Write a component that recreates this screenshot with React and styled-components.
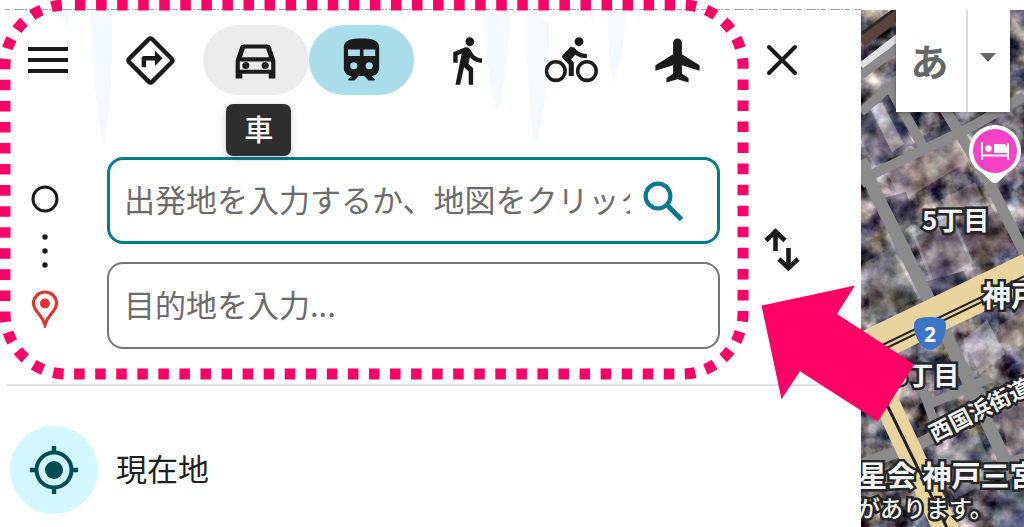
import React from "react";
import styled, { createGlobalStyle } from "styled-components";
import { MdOutlineDirections, MdDirectionsWalk } from "react-icons/md";

const modes = [
  { id: "best", label: "おすすめの交通手段", icon: <MdOutlineDirections /> },
  { id: "car", label: "車", icon: <CarIcon />, hovered: true },
  { id: "transit", label: "公共交通機関", icon: <TrainIcon />, selected: true },
  { id: "walk", label: "徒歩", icon: <MdDirectionsWalk /> },
  { id: "bike", label: "自転車", icon: <BikeIcon /> },
  { id: "flight", label: "飛行機", icon: <PlaneIcon /> },
];

export default function App() {
  return (
    <Page>
      <GlobalStyle />
      <Panel>
        <Directions>
          <Icicles />
          <Highlighted>
            <ModeRow>
              <IconButton aria-label="メニュー">
                <svg width="42" height="30" viewBox="0 0 42 30">
                  <path d="M0 4h40M0 15h40M0 26h40" stroke="#1b1b1b" strokeWidth="4" />
                </svg>
              </IconButton>
              {modes.map((mode) => (
                <ModeButton
                  key={mode.id}
                  aria-label={mode.label}
                  $hovered={mode.hovered}
                  $selected={mode.selected}
                >
                  {mode.icon}
                  {mode.hovered && <Tooltip>{mode.label}</Tooltip>}
                </ModeButton>
              ))}
            </ModeRow>
            <Route>
              <RouteMarks>
                <svg width="28" height="28" viewBox="0 0 28 28">
                  <circle cx="14" cy="14" r="12" fill="none" stroke="#1b1b1b" strokeWidth="3" />
                </svg>
                <svg width="6" height="36" viewBox="0 0 6 36">
                  <g fill="#1b1b1b">
                    <circle cx="3" cy="3" r="2.7" />
                    <circle cx="3" cy="17" r="2.7" />
                    <circle cx="3" cy="31" r="2.7" />
                  </g>
                </svg>
                <svg width="28" height="38" viewBox="0 0 28 38">
                  <path
                    d="M14 2C7.400 2 2.500 7 2.500 13.300c0 4 2.400 7.300 5.200 10.500 2.800 3.200 5 6.600 6.300 11 1.300-4.400 3.500-7.800 6.300-11 2.800-3.200 5.200-6.500 5.200-10.500C25.500 7 20.600 2 14 2z"
                    fill="none"
                    stroke="#dc362e"
                    strokeWidth="3.200"
                  />
                  <circle cx="14" cy="13.500" r="5" fill="#dc362e" />
                </svg>
              </RouteMarks>
              <Fields>
                <Field $active>
                  <input aria-label="出発地" placeholder="出発地を入力するか、地図をクリックします..." />
                  <SearchButton aria-label="検索">
                    <svg width="44" height="44" viewBox="0 0 44 44" fill="none" stroke="#007b8b">
                      <circle cx="17" cy="17" r="12.400" strokeWidth="4.200" />
                      <path d="M26 26l14.500 14.500" strokeWidth="5" />
                    </svg>
                  </SearchButton>
                </Field>
                <Field>
                  <input aria-label="目的地" placeholder="目的地を入力..." />
                </Field>
              </Fields>
            </Route>
            <DottedFrame aria-hidden="true">
              <rect x="5" y="5" rx="61" ry="61" />
            </DottedFrame>
          </Highlighted>
          <SideActions>
            <IconButton aria-label="閉じる">
              <svg width="42" height="42" viewBox="0 0 42 42">
                <path
                  d="M8 8l26 26M34 8l-26 26"
                  stroke="#1b1b1b"
                  strokeWidth="4"
                  strokeLinecap="round"
                />
              </svg>
            </IconButton>
            <IconButton aria-label="出発地と目的地を入れ替え">
              <svg width="42" height="44" viewBox="0 0 42 44" fill="none" stroke="#1b1b1b" strokeWidth="4.600">
                <path d="M14.500 23V4M5 12.500l9.500-9 9.500 9" />
                <path d="M27.500 20v19M18 31l9.500 9 9.500-9" />
              </svg>
            </IconButton>
          </SideActions>
        </Directions>
        <Divider />
        <CurrentLocation>
          <LocationBadge>
            <svg width="48" height="48" viewBox="0 0 48 48" fill="none" stroke="#004d57">
              <circle cx="24" cy="24" r="17.500" strokeWidth="4" />
              <circle cx="24" cy="24" r="9" fill="#004d57" stroke="none" />
              <path d="M24 0v7M24 41v7M0 24h7M41 24h7" strokeWidth="4.400" />
            </svg>
          </LocationBadge>
          <span>現在地</span>
        </CurrentLocation>
      </Panel>
      <MapArea>
        <Satellite />
        <MapLabel $x={61} $y={201} $size={26}>5丁目</MapLabel>
        <MapLabel $x={31} $y={356} $size={26}>6丁目</MapLabel>
        <MapLabel $x={121} $y={276} $size={29}>神戸三宮</MapLabel>
        <MapLabel $x={69} $y={415} $size={22} $turn={-27}>西国浜街道</MapLabel>
        <MapLabel $x={-3} $y={456} $size={29}>星会 神戸三宮</MapLabel>
        <MapLabel $x={-4} $y={489} $size={23} $light>があります。</MapLabel>
        <RouteShield>
          <svg width="34" height="34" viewBox="0 0 34 34">
            <path d="M7 1q10-2 20 0 6 1 6 8 0 8-5 16-5 8-11 8T6 25Q1 17 1 9q0-7 6-8z" fill="#3a75c7" />
          </svg>
          <span>2</span>
        </RouteShield>
        <HotelPin width="54" height="62" viewBox="0 0 54 62">
          <path d="M27 1a26 26 0 0 0-26 26c0 10 5 17 12 21 6 4 9 11 14 11s8-7 14-11c7-4 12-11 12-21A26 26 0 0 0 27 1z" fill="#fff" />
          <circle cx="27" cy="27" r="22" fill="#f641c9" />
          <path d="M14 18v18M40 19v17M14 31.500h26" stroke="#fff" strokeWidth="2" />
          <circle cx="20.500" cy="24.500" r="3.300" fill="#fff" />
          <path d="M26 20h9q4 0 4 4v5H26z" fill="#fff" />
        </HotelPin>
        <InputTools>
          <button aria-label="ひらがな入力">あ</button>
          <button aria-label="入力ツールを選択">
            <svg width="16" height="9" viewBox="0 0 16 9">
              <path d="M0 0h16L8 9z" fill="#666" />
            </svg>
          </button>
        </InputTools>
      </MapArea>
      <PointerArrow width="154" height="138" viewBox="761 285 154 138" aria-hidden="true">
        <path d="M761.500 305.500l93.500-20-18 28.500 77.500 50.500L878 421.500 800 371.300l-18.500 28z" fill="#ff0066" />
      </PointerArrow>
    </Page>
  );
}

function CarIcon() {
  return (
    <svg viewBox="0 0 24 24" fill="currentColor">
      <path
        fillRule="evenodd"
        d="M6.600 4.800h10.800q1.100 0 1.500 1L21 12v8.200h-3V18H6v2.200H3V12l2.100-6.200q.4-1 1.500-1zM7.200 6.600L5.900 10.500h12.200l-1.300-3.900zM4.900 12.400v3.800h14.200v-3.800z"
      />
      <circle cx="7.600" cy="14.300" r="1.600" />
      <circle cx="16.400" cy="14.300" r="1.600" />
    </svg>
  );
}

function TrainIcon() {
  return (
    <svg viewBox="0 0 24 24" fill="currentColor">
      <path
        fillRule="evenodd"
        d="M12 2C7.600 2 4 2.500 4 6v9.500C4 17.400 5.600 19 7.500 19L6 20.500v.5h2.800l2-2h2.400l2 2H18v-.5L16.500 19c1.900 0 3.500-1.600 3.500-3.500V6c0-3.500-3.600-4-8-4zM5.900 7h5.400v3H5.900zM12.900 7h5.300v3h-5.300zM8.500 12.800a1.600 1.600 0 1 1 0 3.200 1.600 1.600 0 0 1 0-3.200zM15.500 12.800a1.600 1.600 0 1 1 0 3.200 1.600 1.600 0 0 1 0-3.200z"
      />
    </svg>
  );
}

function BikeIcon() {
  return (
    <svg viewBox="0 0 24 24" fill="none" stroke="currentColor" overflow="visible">
      <circle cx="4.900" cy="16.800" r="4.200" strokeWidth="1.600" />
      <circle cx="19" cy="16.800" r="4.200" strokeWidth="1.600" />
      <circle cx="15.400" cy="3.500" r="2" fill="currentColor" stroke="none" />
      <path d="M12.700 6.300L8.900 10.300l3 3V19" strokeWidth="2.300" strokeLinejoin="round" />
      <path d="M12.300 6.400c1.200 2 3 3.600 6.700 3.600" strokeWidth="2" />
      <path d="M11.300 7.500l3 1.300-3 3.200-1.500-1.700z" fill="currentColor" stroke="none" />
    </svg>
  );
}

function PlaneIcon() {
  return (
    <svg viewBox="0 0 24 24" fill="currentColor">
      <path d="M22 16.600v-2.400l-8-5V4c0-1.100-.9-2-2-2s-2 .9-2 2v5.200l-8 5v2.400l8-2.500V18l-3 1.900V22l5-1.500 5 1.500v-2.100L14 18v-3.900z" />
    </svg>
  );
}

function Icicles() {
  return (
    <IcicleArt aria-hidden="true">
      <path d="M5 9.500H1100" stroke="#a5a5a5" strokeDasharray="5 2 1 2 9 1 2 2" />
      <g fill="#f3f9fc">
        <path d="M62 10h8q0 12-4 17-3-5-4-17z" />
        <path d="M91 10h21q1 90-8 137Q93 100 91 10z" />
        <path d="M484 10h26q-2 70-13 101-10-30-13-101z" />
        <path d="M527 10q8 8 22 14 0 80-14 122-9-50-8-136z" />
        <path d="M608 10h18q-2 50-13 73-6-30-5-73z" />
        <path d="M400 10h6l-3 12zM590 10h6l-4 16zM160 10h4l-2 8z" />
      </g>
    </IcicleArt>
  );
}

// Aerial view: rooftops, side streets and the two main roads
function Satellite() {
  return (
    <SatelliteArt viewBox="861 10 163 517" preserveAspectRatio="xMinYMin slice" aria-hidden="true">
      <defs>
        <filter id="ground" x="0" y="0" width="100%" height="100%" colorInterpolationFilters="sRGB">
          <feTurbulence type="fractalNoise" baseFrequency="0.045" numOctaves="5" seed="8" />
          <feColorMatrix values="1.5 .3 0 0 -.46  1.5 .1 0 0 -.38  1.4 0 .3 0 -.4  0 0 0 0 1" />
        </filter>
      </defs>
      <rect x="861" y="10" width="163" height="517" filter="url(#ground)" />
      <g opacity=".4">
        <path d="M884 92l30 52-38 22-15-26V108z" fill="#40456a" />
        <path d="M870 108l12-6 22 42-12 8z" fill="#c9c3cf" />
        <path d="M884 168l70-35 18 26-70 42z" fill="#d3b6a8" />
        <path d="M910 145l38-20 8 10-35 18z" fill="#3b3d5e" />
        <path d="M914 235l38-16 20 44-38 22z" fill="#8e7885" stroke="#c9c3cf" strokeWidth="3" />
        <path d="M958 216l32-12 24 42-36 20z" fill="#6d5150" />
        <path d="M940 200l35-18 8 16-30 16z" fill="#b8ab9d" />
        <path d="M876 200l30-8 10 28-14 14z" fill="#2e3044" />
        <path d="M894 256l12-6 22 44-12 6z" fill="#cfccd2" />
        <path d="M866 262l25-14 27 50-48 24z" fill="#7b7d78" />
        <path d="M920 283l44-12 6 16-40 18z" fill="#2f3350" />
        <path d="M963 340l24-20 18 34-25 20z" fill="#d8d2e2" />
        <path d="M1000 325l24-14v30l-20 10z" fill="#b99b8c" />
        <path d="M900 370l18-4 12 30-14 12z" fill="#b3868a" />
        <path d="M1001 410l23-14v50l-16 8z" fill="#ad948f" />
        <path d="M935 455l42-22 20 44-42 22z" fill="#8490a3" />
        <path d="M1000 490l24-12v49h-30z" fill="#35466e" />
      </g>
      <path d="M861 42l40-30" stroke="#5b4440" strokeWidth="12" />
      <path d="M861 34l34-25" stroke="#2a2829" strokeWidth="3" />
      <path d="M861 66l40-31" stroke="#dfe2e2" strokeWidth="7" />
      <g stroke="#8b8b8b" fill="none">
        <path d="M861 75l42-31M861 112l42-37" strokeWidth="9" />
        <path d="M888 84l37 66" strokeWidth="10" />
        <path d="M861 184l12-10 100-48 51-30" strokeWidth="10" />
        <path d="M944 108l44 72 38 76" strokeWidth="11" />
        <path d="M861 160l14 32 56 112 32 66 50 108" strokeWidth="13" />
        <path d="M861 465l60-22 103-52" strokeWidth="12" />
        <path d="M919 380l16 44M930 404l60-26" strokeWidth="9" />
        <path d="M1005 468l19-10" strokeWidth="12" />
      </g>
      <g stroke="#e7d49e">
        <path d="M855 354l175-84" strokeWidth="35" />
        <path d="M866 358l84 180" strokeWidth="25" />
      </g>
      <g stroke="#24221f" strokeWidth="2">
        <path d="M872 350l155-75M872 355l155-75" />
        <path d="M872 374l78 160" strokeWidth="3" />
      </g>
    </SatelliteArt>
  );
}

const GlobalStyle = createGlobalStyle`
  * {
    box-sizing: border-box;
  }
  body {
    margin: 0;
    background: #fff;
    color: #1f1f1f;
    font-family: "Noto Sans CJK JP", "Noto Sans", sans-serif;
  }
  button, input {
    font: inherit;
    color: inherit;
    border: 0;
    padding: 0;
    background: none;
  }
  button {
    cursor: pointer;
  }
  svg {
    display: block;
  }
`;

const Page = styled.div`
  position: relative;
  display: flex;
  min-height: 100vh;
  overflow: hidden;
`;

const Panel = styled.main`
  flex: 1;
  min-width: 0;
`;

const Directions = styled.section`
  position: relative;
  display: flex;
`;

const Highlighted = styled.div`
  position: relative;
  flex: 1;
  min-width: 0;
  padding: 25px 0 30px;
`;

const ModeRow = styled.div`
  display: grid;
  grid-template-columns: 98px repeat(6, 1fr);
  padding-right: 18px;
`;

const IconButton = styled.button`
  display: flex;
  align-items: center;
  justify-content: center;
`;

const ModeButton = styled(IconButton)`
  position: relative;
  height: 70px;
  border-radius: 35px;
  color: #1b1b1b;
  background: ${({ $hovered, $selected }) =>
    $selected ? "#a8dde9" : $hovered ? "#ececec" : "none"};

  > svg {
    width: 53px;
    height: 53px;
  }
`;

const Tooltip = styled.span`
  position: absolute;
  top: 79px;
  left: 23px;
  z-index: 1;
  height: 52px;
  padding: 0 18px;
  border-radius: 7px;
  background: #2e2e2e;
  color: #fff;
  font-size: 29px;
  font-weight: 500;
  line-height: 48px;
  box-shadow: 0 2px 8px rgba(0, 0, 0, 0.2);
`;

const Route = styled.div`
  display: flex;
  gap: 17px;
  margin-top: 62px;
  padding-right: 28px;
`;

const RouteMarks = styled.div`
  display: flex;
  flex-direction: column;
  align-items: center;
  justify-content: space-between;
  width: 90px;
  padding: 28px 0 21px;
`;

const Fields = styled.div`
  display: grid;
  flex: 1;
  min-width: 0;
  gap: 18px;
`;

const Field = styled.div`
  display: flex;
  align-items: center;
  height: 87px;
  padding: 0 ${({ $active }) => ($active ? "32px 0 14px" : "15px")};
  border: ${({ $active }) => ($active ? "3px solid #007b8b" : "2px solid #757575")};
  border-radius: 16px;

  input {
    flex: 1;
    min-width: 0;
    height: 60px;
    padding-bottom: 5px;
    font-size: 31px;
    outline: none;
  }

  input::placeholder {
    color: #6b6b6b;
    opacity: 1;
  }
`;

const SearchButton = styled(IconButton)`
  margin-left: 11px;
`;

const DottedFrame = styled.svg`
  position: absolute;
  inset: 0;
  width: 100%;
  height: 100%;
  overflow: visible;
  pointer-events: none;

  rect {
    width: calc(100% - 10px);
    height: calc(100% - 10px);
    fill: none;
    stroke: #ff0066;
    stroke-width: 11px;
    stroke-dasharray: 10.53 10.53;
    stroke-dashoffset: -9;
  }
`;

const SideActions = styled.div`
  display: flex;
  flex-direction: column;
  align-items: flex-start;
  gap: 147px;
  width: 113px;
  padding: 39px 0 0 13px;
`;

const IcicleArt = styled.svg`
  position: absolute;
  inset: 0;
  width: 100%;
  height: 100%;
`;

const Divider = styled.hr`
  height: 2px;
  margin: 5px 0 0 6px;
  border: 0;
  background: #e3e3e3;
`;

const CurrentLocation = styled.button`
  display: flex;
  align-items: center;
  gap: 18px;
  width: 100%;
  padding: 40px 10px 12px;
  font-size: 31px;
  line-height: 40px;

  > span:last-child {
    padding-bottom: 5px;
  }
`;

const LocationBadge = styled.span`
  display: grid;
  place-items: center;
  width: 88px;
  height: 88px;
  border-radius: 50%;
  background: #d3f7ff;
`;

const MapArea = styled.aside`
  position: relative;
  width: 163px;
  margin-top: 10px;
  overflow: hidden;
`;

const SatelliteArt = styled.svg`
  position: absolute;
  inset: 0;
  width: 100%;
  height: 100%;
`;

const MapLabel = styled.span`
  position: absolute;
  left: ${({ $x }) => $x}px;
  top: ${({ $y }) => $y - 10}px;
  color: #f4f4f4;
  font-size: ${({ $size }) => $size}px;
  font-weight: ${({ $light }) => ($light ? 500 : 700)};
  line-height: 36px;
  white-space: nowrap;
  transform: rotate(${({ $turn }) => $turn || 0}deg);
  transform-origin: 0 50%;
  -webkit-text-stroke: 5px #252525;
  paint-order: stroke fill;
`;

const RouteShield = styled.div`
  position: absolute;
  left: 52px;
  top: 307px;
  display: grid;
  place-items: center;
  color: #fff;
  font: bold 21px/32px "Noto Sans", sans-serif;

  > * {
    grid-area: 1 / 1;
  }
`;

const HotelPin = styled.svg`
  position: absolute;
  right: 2px;
  top: 114px;
`;

const InputTools = styled.div`
  position: absolute;
  top: 0;
  right: 14px;
  display: grid;
  grid-template-columns: 70px 44px;
  height: 102px;
  background: #fff;
  color: #666;
  font-size: 38px;
  font-weight: 700;
  box-shadow: 0 1px 4px rgba(0, 0, 0, 0.4);

  button {
    padding: 0 3px 4px 0;
  }

  button + button {
    display: grid;
    place-items: center;
    padding-bottom: 8px;
    border-left: 2px solid #dedede;
  }
`;

const PointerArrow = styled.svg`
  position: absolute;
  top: 285px;
  right: 109px;
`;
